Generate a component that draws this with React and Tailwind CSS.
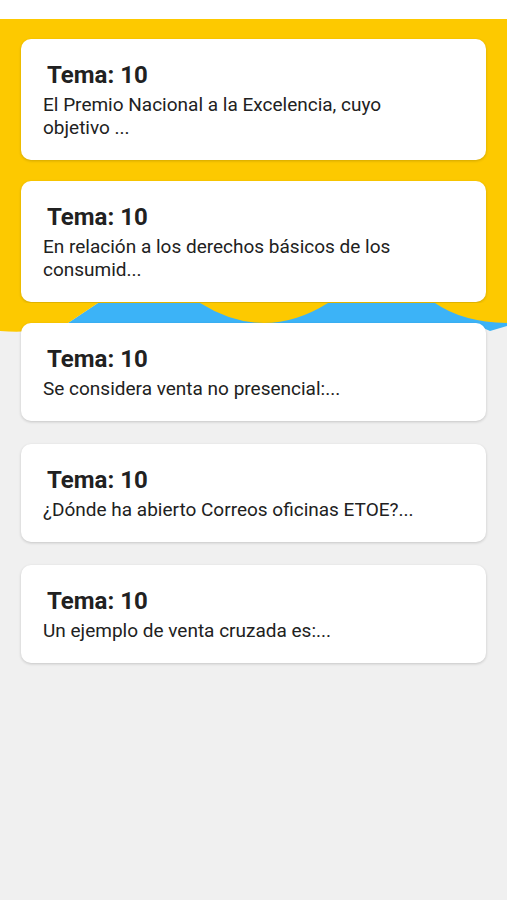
const items = [
  { tema: 10, text: "El Premio Nacional a la Excelencia, cuyo objetivo ..." },
  { tema: 10, text: "En relación a los derechos básicos de los consumid..." },
  { tema: 10, text: "Se considera venta no presencial:..." },
  { tema: 10, text: "¿Dónde ha abierto Correos oficinas ETOE?..." },
  { tema: 10, text: "Un ejemplo de venta cruzada es:..." },
];

const Card = ({ tema, text }) => (
  <div className="bg-white rounded-[10px] shadow-[0_1px_3px_rgba(0,0,0,0.18)] pl-[22px] pr-[40px] pt-[20px] pb-[21px]">
    <div className="pl-[4px] text-[24px] leading-[32px] font-bold text-[#212121]">Tema: {tema}</div>
    <div className="mt-[2px] text-[19px] leading-[23px] text-[#212121]">{text}</div>
  </div>
);

const Wave = () => (
  <svg className="block w-full h-[30px]" viewBox="0 0 507 30" preserveAspectRatio="none">
    <path d="M98 0 H507 V23 L490 28 L472 20 H68 Z" fill="#3cb3f7" />
    <path d="M0 0 H98 L68 20 Q40 31 0 28 Z" fill="#fdc900" />
    <path d="M200 0 Q264 40 328 0 Z" fill="#fdc900" />
    <path d="M435 0 Q462 19 507 20 V0 Z" fill="#fdc900" />
  </svg>
);

export default function App() {
  return (
    <div className="min-h-[900px] bg-[#f0f0f0] font-['Roboto',sans-serif]">
      <div className="h-[19px] bg-white" />

      {/* Yellow header */}
      <div className="bg-[#fdc900] px-[21px] pt-[20px] pb-px flex flex-col gap-[21px]">
        {items.slice(0, 2).map((it, i) => (
          <Card key={i} {...it} />
        ))}
      </div>

      <Wave />

      <div className="relative -mt-[10px] px-[21px] flex flex-col gap-[23px]">
        {items.slice(2).map((it, i) => (
          <Card key={i} {...it} />
        ))}
      </div>
    </div>
  );
}
